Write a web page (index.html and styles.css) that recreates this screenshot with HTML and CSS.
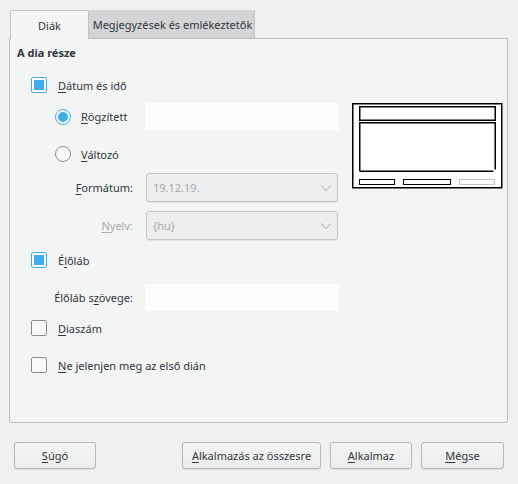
FILE: index.html
```html
<!DOCTYPE html>
<html lang="hu">
<head>
<meta charset="utf-8">
<link rel="stylesheet" href="styles.css">
</head>
<body>
<div class="dialog">
  <div class="tabs">
    <div class="tab active">Diák</div>
    <div class="tab">Megjegyzések és emlékeztetők</div>
  </div>
  <div class="panel">
    <div class="left">
      <div class="heading">A dia része</div>
      <div class="row r1">
        <span class="check on"></span><span class="lbl"><u>D</u>átum és idő</span>
      </div>
      <div class="row r2">
        <div class="cell radio-cell"><span class="radio on"></span><span class="lbl"><u>R</u>ögzített</span></div>
        <div class="field"></div>
      </div>
      <div class="row r3">
        <div class="cell radio-cell"><span class="radio"></span><span class="lbl"><u>V</u>áltozó</span></div>
      </div>
      <div class="row r4">
        <div class="cell right"><span><u>F</u>ormátum:</span></div>
        <div class="combo"><span>19.12.19.</span><svg class="chev" width="12" height="8" viewBox="0 0 12 8"><path d="M1 1.5 L6 6.5 L11 1.5" fill="none" stroke="#a3a5a7" stroke-width="1"/></svg></div>
      </div>
      <div class="row r5">
        <div class="cell right disabled"><span><u>N</u>yelv:</span></div>
        <div class="combo"><span>{hu}</span><svg class="chev" width="12" height="8" viewBox="0 0 12 8"><path d="M1 1.5 L6 6.5 L11 1.5" fill="none" stroke="#a3a5a7" stroke-width="1"/></svg></div>
      </div>
      <div class="row r6">
        <span class="check on"></span><span class="lbl">É<u>l</u>őláb</span>
      </div>
      <div class="row r7">
        <div class="cell right"><span>Élőláb s<u>z</u>övege:</span></div>
        <div class="field"></div>
      </div>
      <div class="row r8">
        <span class="check"></span><span class="lbl"><u>D</u>iaszám</span>
      </div>
      <div class="row r9">
        <span class="check"></span><span class="lbl"><u>N</u>e jelenjen meg az első dián</span>
      </div>
    </div>
    <div class="preview">
      <svg width="151" height="86" viewBox="0 0 151 86">
        <rect x="0.75" y="0.75" width="149" height="84" fill="#ffffff" stroke="#000" stroke-width="1.5"/>
        <rect x="7.75" y="3.75" width="135.5" height="13.5" fill="none" stroke="#000" stroke-width="1.5"/>
        <path d="M7.75 68.25 V19.75 H143.25 V66.5" fill="none" stroke="#000" stroke-width="1.5"/>
        <path d="M7.75 68.25 H141.5" fill="none" stroke="#000" stroke-width="1.5"/>
        <rect x="7.5" y="76.5" width="35" height="5" fill="none" stroke="#000" stroke-width="1"/>
        <rect x="51.5" y="76.5" width="47" height="5" fill="none" stroke="#000" stroke-width="1"/>
        <rect x="107.5" y="76.5" width="35" height="5" fill="none" stroke="#c4c4c4" stroke-width="1"/>
      </svg>
    </div>
  </div>
  <div class="footer">
    <button class="btn w82"><u>S</u>úgó</button>
    <div class="spacer"></div>
    <button class="btn w139"><u>A</u>lkalmazás az összesre</button>
    <button class="btn w82"><u>A</u>lkalmaz</button>
    <button class="btn w83"><u>M</u>égse</button>
  </div>
</div>
</body>
</html>
```
FILE: styles.css
```css
* { box-sizing: border-box; }
html, body { margin: 0; padding: 0; }
body {
  background: #eff0f1;
  font-family: "Noto Sans", "DejaVu Sans", sans-serif;
  font-size: 11px;
  color: #31363b;
  width: 518px;
  height: 484px;
  overflow: hidden;
}
u { text-decoration-thickness: 1px; text-underline-offset: 2px; }
.dialog { padding: 10px 10px 0 9px; }
.tabs { display: flex; height: 28px; padding-left: 1px; }
.tab {
  height: 28px;
  display: flex;
  align-items: center;
  justify-content: center;
  white-space: nowrap;
}
.tab.active {
  width: 79px;
  background: #f4f5f5;
  border: 1px solid #c3c4c5;
  border-bottom: none;
  border-radius: 2px 2px 0 0;
  height: 29px;
  margin-bottom: -1px;
  position: relative;
  z-index: 1;
}
.tab:not(.active) {
  width: 166px;
  background: #d3d4d5;
  border-right: 1px solid #c3c4c5;
  padding-left: 2px;
}
.panel {
  height: 385px;
  background: #f3f4f4;
  border: 1px solid #bcbdbe;
  border-radius: 0 0 3px 3px;
  display: flex;
  padding-left: 21px;
}
.left { width: 309px; display: flex; flex-direction: column; }
.heading { font-weight: bold; height: 16px; line-height: 16px; margin-top: 6px; margin-left: -14px; }
.row { display: flex; align-items: center; }
.r1 { margin-top: 16px; height: 16px; }
.r2 { margin-top: 10px; height: 27px; }
.r3 { margin-top: 10px; height: 28px; }
.r4 { margin-top: 5px; height: 29px; }
.r5 { margin-top: 9px; height: 29px; }
.r6 { margin-top: 8px; height: 24px; }
.r7 { margin-top: 12px; height: 27px; }
.r8 { margin-top: 5px; height: 24px; }
.r9 { margin-top: 13px; height: 24px; }
.lbl { margin-left: 11px; }
.cell { width: 102px; display: flex; align-items: center; height: 100%; }
.radio-cell { padding-left: 24px; }
.radio-cell .lbl { margin-left: 10px; }
.right { justify-content: flex-end; }
.disabled { color: #a6a8aa; }
.check {
  width: 16px; height: 16px;
  border: 1px solid #8a8d90;
  border-radius: 2px;
  background: #f8f8f8;
  position: relative;
  flex: none;
}
.check.on { border-color: #3daee9; background: #fcfcfc; }
.check.on::after {
  content: "";
  position: absolute;
  left: 2px; top: 2px; width: 10px; height: 10px;
  background: #3daee9;
}
.radio {
  width: 16px; height: 16px;
  border: 1px solid #8a8d90;
  border-radius: 50%;
  background: #f8f8f8;
  position: relative;
  flex: none;
}
.radio.on { border-color: #3daee9; background: #fcfcfc; }
.radio.on::after {
  content: "";
  position: absolute;
  left: 2px; top: 2px; width: 10px; height: 10px;
  border-radius: 50%;
  background: #3daee9;
}
.field {
  margin-left: 12px;
  width: 194px; height: 27px;
  background: #fcfcfc;
}
.combo {
  margin-left: 13px;
  width: 192px; height: 29px;
  background: #ecedee;
  border: 1px solid #c3c4c5;
  border-radius: 3px;
  box-shadow: 0 1px 0 rgba(0,0,0,0.06);
  display: flex;
  align-items: center;
  justify-content: space-between;
  padding: 0 5px 0 6px;
  color: #a6a8aa;
}
.chev { margin-top: 1px; }
.preview { margin-left: 12px; margin-top: 64px; height: 86px; }
.preview svg { display: block; }
.footer {
  display: flex;
  margin-top: 19px;
  padding-left: 5px;
  padding-right: 4px;
}
.spacer { flex: 1; }
.btn {
  font: inherit;
  color: #31363b;
  height: 27px;
  background: linear-gradient(#f3f4f4, #ebecec);
  border: 1px solid #b5b6b7;
  border-radius: 3px;
  box-shadow: 0 1px 1px rgba(0,0,0,0.08);
  padding: 0;
  margin-left: 9px;
}
.btn:first-child { margin-left: 0; }
.w82 { width: 82px; }
.w83 { width: 83px; }
.w139 { width: 139px; }
```
